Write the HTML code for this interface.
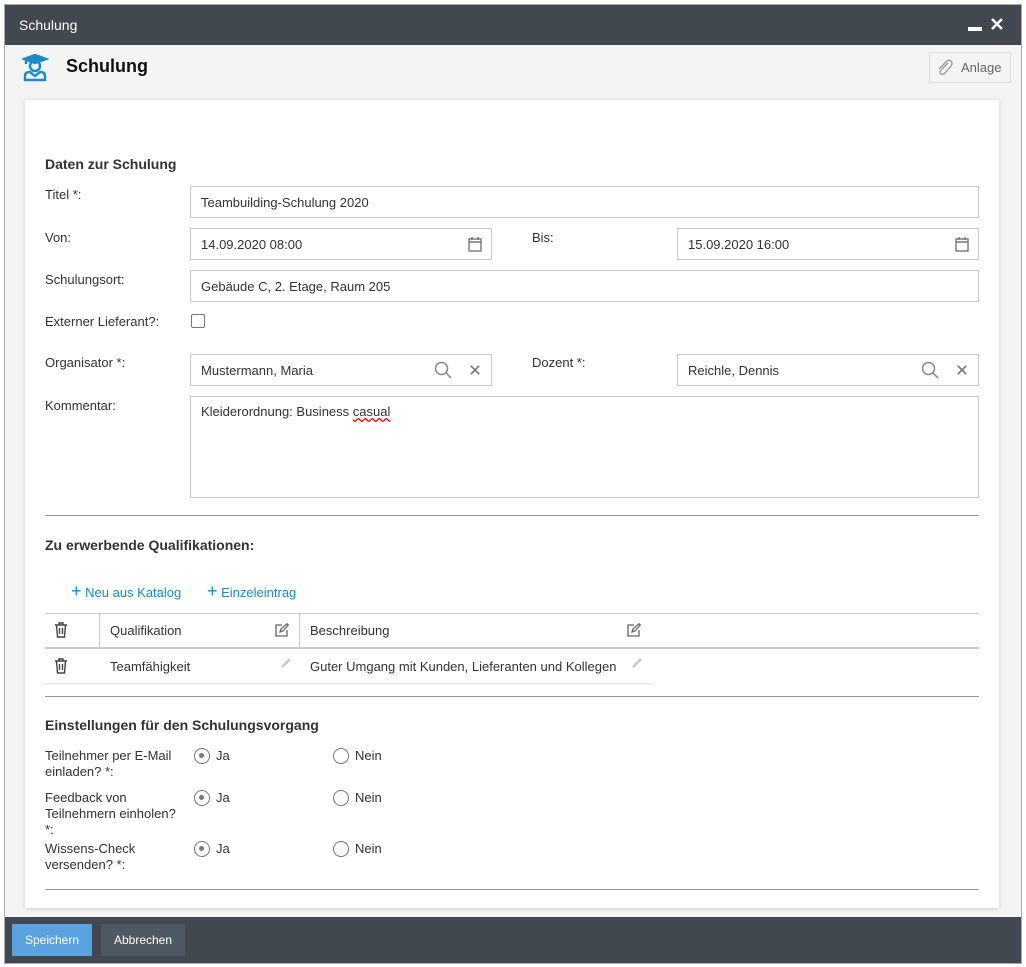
<!DOCTYPE html>
<html><head><meta charset="utf-8"><style>
*{box-sizing:border-box;margin:0;padding:0}
body{width:1026px;height:967px;background:#fff;font-family:"Liberation Sans",Arial,sans-serif;font-size:13px;color:#333;position:relative;overflow:hidden}
.a{position:absolute}
.win{left:4px;top:4px;width:1018px;height:960px;background:#f4f4f4;border:1px solid #aaa}
.inp{position:absolute;border:1px solid #ccc;background:#fff;padding:0 10px;line-height:31px;height:32px;font-size:13px;color:#333}
.lbl{position:absolute;font-size:13px;color:#333;line-height:16px}
.hr{position:absolute;left:45px;width:934px;height:1px;background:#999}
.h{position:absolute;font-weight:bold;font-size:14px;color:#333}
.rad{position:absolute;width:16px;height:16px;border:1.5px solid #777;border-radius:50%}
.rad.on::after{content:"";position:absolute;left:4px;top:4px;width:5px;height:5px;border-radius:50%;background:#777}
.link{position:absolute;color:#1a8bc9;font-size:13px}
</style></head><body>
<div class="a win"></div>
<div class="a" style="left:5px;top:5px;width:1016px;height:40px;background:#41484f"></div>
<div class="a" style="left:19px;top:17px;color:#fff;font-size:14px">Schulung</div>
<div class="a" style="left:968px;top:27px;width:14px;height:4px;background:#fff"></div>
<svg class="a" style="left:991px;top:18px" width="12" height="12" viewBox="0 0 12 12" stroke="#fff" stroke-width="2.6"><path d="M1 1 L11 11 M11 1 L1 11"/></svg>
<svg class="a" style="left:22px;top:54px" width="28" height="28" viewBox="0 0 28 28" fill="none" stroke="#1a8bc9" stroke-width="2.4">
<path d="M2 5 L13 1 L24 5 L13 9 Z" fill="#1a8bc9"/><path d="M4 5 V10"/><circle cx="13" cy="12" r="5"/><path d="M3 26 V22 Q3 18 8 18 L13 22 L18 18 Q23 18 23 22 V26 Z"/></svg>
<div class="a" style="left:66px;top:56px;font-size:18px;font-weight:bold;color:#111">Schulung</div>
<div class="a" style="left:929px;top:52px;width:82px;height:31px;border:1px solid #ddd;background:#f4f4f4"></div>
<svg class="a" style="left:936px;top:58px" width="18" height="20" viewBox="0 0 18 20" fill="none" stroke="#999" stroke-width="1.3"><path d="M12 5 L5 12 Q3 15 5 16 Q7 17 9 15 L15 8 Q17 5 15 3 Q13 1 10 4 L3 11"/></svg>
<div class="a" style="left:961px;top:60px;color:#666;font-size:13px">Anlage</div>
<div class="a" style="left:25px;top:100px;width:974px;height:808px;background:#fff;box-shadow:0 1px 5px rgba(0,0,0,.15)"></div>
<div class="h" style="left:45px;top:156px">Daten zur Schulung</div>
<div class="lbl" style="left:45px;top:187px">Titel *:</div>
<div class="inp" style="left:190px;top:186px;width:789px">Teambuilding-Schulung 2020</div>
<div class="lbl" style="left:45px;top:230px">Von:</div>
<div class="inp" style="left:190px;top:228px;width:302px">14.09.2020 08:00</div>
<div class="lbl" style="left:532px;top:230px">Bis:</div>
<div class="inp" style="left:677px;top:228px;width:302px">15.09.2020 16:00</div>
<svg class="a" style="left:468px;top:236px" width="14" height="16" viewBox="0 0 14 16" fill="none" stroke="#777" stroke-width="1.4"><rect x="1" y="3" width="12" height="12"/><path d="M1 6 H13 M4 1 V4 M10 1 V4"/></svg>
<svg class="a" style="left:955px;top:236px" width="14" height="16" viewBox="0 0 14 16" fill="none" stroke="#777" stroke-width="1.4"><rect x="1" y="3" width="12" height="12"/><path d="M1 6 H13 M4 1 V4 M10 1 V4"/></svg>
<div class="lbl" style="left:45px;top:272px">Schulungsort:</div>
<div class="inp" style="left:190px;top:270px;width:789px">Gebäude C, 2. Etage, Raum 205</div>
<div class="lbl" style="left:45px;top:314px">Externer Lieferant?:</div>
<div class="a" style="left:191px;top:314px;width:14px;height:14px;border:1.5px solid #777;border-radius:2px"></div>
<div class="lbl" style="left:45px;top:355px">Organisator *:</div>
<div class="inp" style="left:190px;top:354px;width:302px">Mustermann, Maria</div>
<div class="lbl" style="left:532px;top:355px">Dozent *:</div>
<div class="inp" style="left:677px;top:354px;width:302px">Reichle, Dennis</div>
<svg class="a" style="left:434px;top:361px" width="18" height="18" viewBox="0 0 18 18" fill="none" stroke="#888" stroke-width="1.5"><circle cx="7.5" cy="7.5" r="6"/><path d="M12 12 L17 17"/></svg>
<svg class="a" style="left:470px;top:365px" width="10" height="10" viewBox="0 0 12 12" stroke="#777" stroke-width="2"><path d="M1 1 L11 11 M11 1 L1 11"/></svg>
<svg class="a" style="left:921px;top:361px" width="18" height="18" viewBox="0 0 18 18" fill="none" stroke="#888" stroke-width="1.5"><circle cx="7.5" cy="7.5" r="6"/><path d="M12 12 L17 17"/></svg>
<svg class="a" style="left:957px;top:365px" width="10" height="10" viewBox="0 0 12 12" stroke="#777" stroke-width="2"><path d="M1 1 L11 11 M11 1 L1 11"/></svg>
<div class="lbl" style="left:45px;top:398px">Kommentar:</div>
<div class="inp" style="left:190px;top:396px;width:789px;height:102px;line-height:16px;padding-top:7px">Kleiderordnung: Business <span style="text-decoration:underline wavy red">casual</span></div>
<div class="hr" style="top:515px"></div>
<div class="h" style="left:45px;top:537px">Zu erwerbende Qualifikationen:</div>
<div class="link" style="left:71px;top:583px"><span style="font-size:18px;line-height:16px">+</span> Neu aus Katalog</div>
<div class="link" style="left:207px;top:583px"><span style="font-size:18px;line-height:16px">+</span> Einzeleintrag</div>
<div class="a" style="left:45px;top:613px;width:934px;height:1px;background:#ccc"></div>
<div class="a" style="left:45px;top:647px;width:934px;height:2px;background:#ccc"></div>
<div class="a" style="left:45px;top:683px;width:606px;height:1px;background:#e4e4e4"></div>
<div class="a" style="left:99px;top:613px;width:1px;height:35px;background:#ccc"></div>
<div class="a" style="left:299px;top:613px;width:1px;height:35px;background:#ccc"></div>
<svg class="a" style="left:54px;top:622px" width="14" height="16" viewBox="0 0 14 16" fill="none" stroke="#444" stroke-width="1.4"><path d="M1 3 H13 M5 3 V1 H9 V3 M2.5 3 L3.5 15 H10.5 L11.5 3 M5.5 6 V12 M8.5 6 V12"/></svg>
<svg class="a" style="left:54px;top:658px" width="14" height="16" viewBox="0 0 14 16" fill="none" stroke="#444" stroke-width="1.4"><path d="M1 3 H13 M5 3 V1 H9 V3 M2.5 3 L3.5 15 H10.5 L11.5 3 M5.5 6 V12 M8.5 6 V12"/></svg>
<div class="lbl" style="left:110px;top:623px">Qualifikation</div>
<div class="lbl" style="left:310px;top:623px">Beschreibung</div>
<svg class="a" style="left:275px;top:623px" width="14" height="14" viewBox="0 0 14 14" fill="none" stroke="#666" stroke-width="1.3"><path d="M7 2 H1 V13 H12 V7 M5 9 L6 6 L12 0.8 L13.2 2 L8 8 Z"/></svg>
<svg class="a" style="left:627px;top:623px" width="14" height="14" viewBox="0 0 14 14" fill="none" stroke="#666" stroke-width="1.3"><path d="M7 2 H1 V13 H12 V7 M5 9 L6 6 L12 0.8 L13.2 2 L8 8 Z"/></svg>
<div class="lbl" style="left:110px;top:659px">Teamfähigkeit</div>
<div class="lbl" style="left:310px;top:659px">Guter Umgang mit Kunden, Lieferanten und Kollegen</div>
<svg class="a" style="left:280px;top:656px" width="13" height="13" viewBox="0 0 13 13"><path d="M1 12 L2 9 L9 2 L11 4 L4 11 Z" fill="#ccc"/></svg>
<svg class="a" style="left:631px;top:656px" width="13" height="13" viewBox="0 0 13 13"><path d="M1 12 L2 9 L9 2 L11 4 L4 11 Z" fill="#ccc"/></svg>
<div class="hr" style="top:696px"></div>
<div class="h" style="left:45px;top:717px">Einstellungen für den Schulungsvorgang</div>
<div class="lbl" style="left:45px;top:748px">Teilnehmer per E-Mail<br>einladen? *:</div>
<div class="lbl" style="left:45px;top:790px">Feedback von<br>Teilnehmern einholen?<br>*:</div>
<div class="lbl" style="left:45px;top:841px">Wissens-Check<br>versenden? *:</div>
<div class="rad on" style="left:194px;top:748px"></div><div class="lbl" style="left:216px;top:748px">Ja</div>
<div class="rad" style="left:333px;top:748px"></div><div class="lbl" style="left:355px;top:748px">Nein</div>
<div class="rad on" style="left:194px;top:790px"></div><div class="lbl" style="left:216px;top:790px">Ja</div>
<div class="rad" style="left:333px;top:790px"></div><div class="lbl" style="left:355px;top:790px">Nein</div>
<div class="rad on" style="left:194px;top:841px"></div><div class="lbl" style="left:216px;top:841px">Ja</div>
<div class="rad" style="left:333px;top:841px"></div><div class="lbl" style="left:355px;top:841px">Nein</div>
<div class="hr" style="top:889px"></div>
<div class="a" style="left:5px;top:917px;width:1016px;height:46px;background:#41484f"></div>
<div class="a" style="left:12px;top:924px;width:80px;height:32px;background:#5aa3e0;color:#fff;font-size:12px;line-height:32px;text-align:center">Speichern</div>
<div class="a" style="left:101px;top:924px;width:84px;height:32px;background:#4d5862;color:#fff;font-size:12px;line-height:32px;text-align:center">Abbrechen</div>
</body></html>
